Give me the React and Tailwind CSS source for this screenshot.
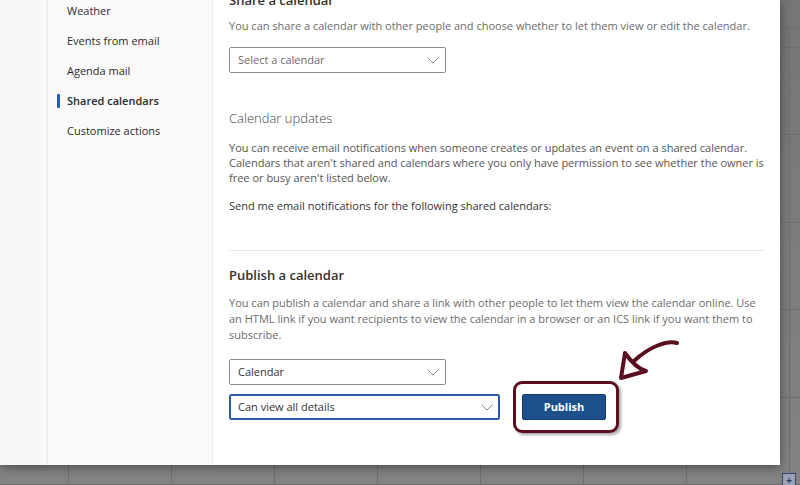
import React from "react";

const navItems = ["Weather", "Events from email", "Agenda mail", "Shared calendars", "Customize actions"];

const Chevron = () => (
  <svg width="12" height="7" viewBox="0 0 12 7" className="shrink-0">
    <path d="M0.5 0.5 L6 6 L11.5 0.5" fill="none" stroke="#8a8a8a" strokeWidth="1" />
  </svg>
);

const Dropdown = ({ label, width, active, muted }) => (
  <div
    className={`flex items-center justify-between h-[26px] pl-[8px] pr-[6px] rounded-[2px] bg-white ${width} ${
      active ? "border border-[#2a5ba7] shadow-[inset_0_0_0_1px_#2a5ba7]" : "border border-[#8a8a8a]"
    }`}
  >
    <span className={`text-[11px] ${muted ? "text-[#6b6b6b]" : "text-[#333]"}`}>{label}</span>
    <Chevron />
  </div>
);

const BackgroundGrid = () => (
  <div className="flex flex-col w-full h-full">
    <div className="h-[38px] border-b border-[#6e6e6e]"></div>
    <div className="h-[24px] border-b border-[#6e6e6e] flex ml-[-34px]">
      {Array.from({ length: 9 }).map((_, i) => (
        <div key={i} className="w-[103px] shrink-0 border-r border-[#6e6e6e]"></div>
      ))}
    </div>
    <div className="flex-1 flex flex-col">
      {Array.from({ length: 5 }).map((_, r) => (
        <div key={r} className="h-[87.5px] shrink-0 flex ml-[-34px] border-b border-[#6e6e6e]">
          {Array.from({ length: 9 }).map((_, i) => (
            <div key={i} className="w-[103px] shrink-0 border-r border-[#6e6e6e]"></div>
          ))}
        </div>
      ))}
    </div>
  </div>
);

export default function App() {
  return (
    <div className="relative w-[800px] h-[485px] overflow-hidden bg-gradient-to-b from-[#767676] to-[#838383] font-['Open_Sans',sans-serif]">
      <BackgroundGrid />

      {/* expand icon in the corner */}
      <div className="absolute right-[4px] bottom-0 w-[14px] h-[12px] border border-[#3b4a6b] border-b-0 bg-[#9aa3b5] flex items-center justify-center">
        <span className="text-[10px] leading-none text-[#2b3a5a] font-bold">+</span>
      </div>

      {/* settings modal */}
      <div className="absolute left-0 top-0 w-[780px] h-[465px] bg-white flex shadow-[0_2px_10px_rgba(0,0,0,0.45)]">
        <div className="w-[48px] shrink-0 bg-[#f8f8f8] border-r border-[#ebebeb]"></div>

        <div className="w-[165px] shrink-0 bg-[#fafafa] border-r border-[#ebebeb]">
          <div className="mt-[-4px]">
            {navItems.map((item) => {
              const active = item === "Shared calendars";
              return (
                <div key={item} className="relative flex items-center h-[30px] pl-[19px]">
                  {active && <div className="absolute left-[9px] top-[8px] w-[3px] h-[14px] bg-[#1f5fb4] rounded-[1px]"></div>}
                  <span className={`text-[11px] text-[#2b2b2b] ${active ? "font-semibold" : ""}`}>{item}</span>
                </div>
              );
            })}
          </div>
        </div>

        <div className="flex-1 min-w-0 pl-[16px] pr-[16px]">
          <h2 className="mt-[-10px] text-[13px] leading-[20px] font-semibold text-[#323130]">Share a calendar</h2>
          <p className="mt-[8px] text-[11px] leading-[16px] text-[#6b6b6b] whitespace-nowrap">
            You can share a calendar with other people and choose whether to let them view or edit the calendar.
          </p>
          <div className="mt-[13px]">
            <Dropdown label="Select a calendar" width="w-[217px]" muted />
          </div>

          <h2 className="mt-[35px] text-[13px] leading-[20px] font-light text-[#444]">Calendar updates</h2>
          <p className="mt-[12px] text-[11px] leading-[15px] text-[#555] whitespace-nowrap">
            You can receive email notifications when someone creates or updates an event on a shared calendar.
            <br />
            Calendars that aren't shared and calendars where you only have permission to see whether the owner is
            <br />
            free or busy aren't listed below.
          </p>
          <p className="mt-[13px] text-[11px] leading-[15px] text-[#333]">
            Send me email notifications for the following shared calendars:
          </p>

          <hr className="mt-[37px] h-[1px] bg-[#e8e8e8] border-0" />

          <h2 className="mt-[14px] text-[13px] leading-[20px] font-semibold text-[#323130]">Publish a calendar</h2>
          <p className="mt-[10px] text-[11px] leading-[16px] text-[#6b6b6b] whitespace-nowrap">
            You can publish a calendar and share a link with other people to let them view the calendar online. Use
            <br />
            an HTML link if you want recipients to view the calendar in a browser or an ICS link if you want them to
            <br />
            subscribe.
          </p>

          <div className="mt-[16px]">
            <Dropdown label="Calendar" width="w-[217px]" />
          </div>
          <div className="mt-[9px] flex items-start">
            <Dropdown label="Can view all details" width="w-[271px]" active />
            <div className="relative ml-[22px] mt-[-1px]">
              <button className="w-[84px] h-[26px] bg-[#1d4f8b] border border-[#163f70] rounded-[2px] text-white text-[11px] font-bold">
                Publish
              </button>
              <div className="absolute left-[-9px] top-[-12px] w-[106px] h-[52px] rounded-[9px] border-[3px] border-[#5a0f20] shadow-[2px_2px_3px_rgba(0,0,0,0.35)]"></div>
              <svg
                className="absolute left-[88px] top-[-52px] overflow-visible"
                width="70"
                height="45"
                viewBox="0 0 70 45"
              >
                <path
                  d="M67 2 C58 -1 40 5 24 20"
                  fill="none"
                  stroke="#5a0f20"
                  strokeWidth="4"
                  strokeLinecap="round"
                />
                <path
                  d="M15 12 L11 37 L36 30 C28 28 22 22 15 12 Z"
                  fill="none"
                  stroke="#5a0f20"
                  strokeWidth="4"
                  strokeLinejoin="round"
                />
              </svg>
            </div>
          </div>
        </div>
      </div>
    </div>
  );
}
